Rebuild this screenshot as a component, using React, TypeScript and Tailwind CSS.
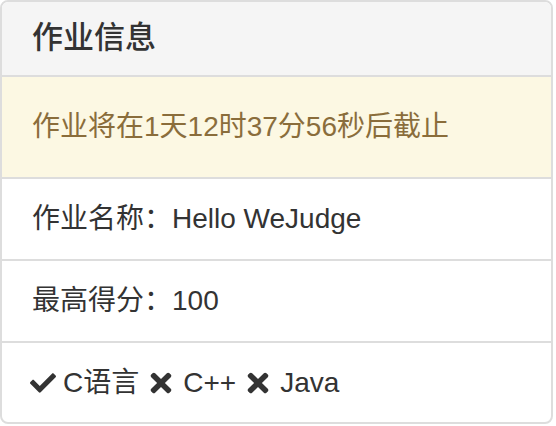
import { FaCheck, FaTimes } from "react-icons/fa";

const font = {
  fontFamily: '"Liberation Sans", "Noto Sans CJK SC", sans-serif',
};

export default function App() {
  return (
    <div className="bg-white w-[556px] h-[426px]" style={font}>
      <div className="w-[553px] border-2 border-[#ddd] rounded-lg overflow-hidden text-[#333]">
        <div className="h-[73px] bg-[#f5f5f5] flex items-center px-[30px] text-[31px] font-medium">
          作业信息
        </div>
        <div className="h-[102px] border-t-2 border-[#ddd] bg-[#fcf8e3] text-[#8a6d3b] flex items-center px-[30px] text-[28px]">
          作业将在1天12时37分56秒后截止
        </div>
        <div className="h-[82px] border-t-2 border-[#ddd] flex items-center px-[30px] text-[28px]">
          作业名称：Hello WeJudge
        </div>
        <div className="h-[82px] border-t-2 border-[#ddd] flex items-center px-[30px] text-[28px]">
          最高得分：100
        </div>
        <div className="h-[81px] border-t-2 border-[#ddd] flex items-center gap-[7px] px-[28px] text-[28px]">
          <FaCheck className="size-[26px]" />
          <span>C语言</span>
          <FaTimes className="size-[30px]" />
          <span>C++</span>
          <FaTimes className="size-[30px]" />
          <span>Java</span>
        </div>
      </div>
    </div>
  );
}
